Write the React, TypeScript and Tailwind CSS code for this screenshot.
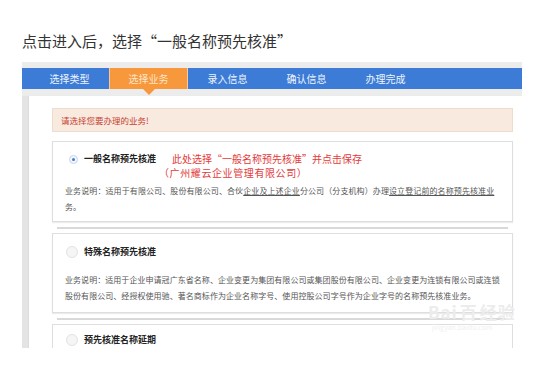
import React from "react";

const tabs = ["选择类型", "选择业务", "录入信息", "确认信息", "办理完成"];

export default function App() {
  return (
    <div className="relative w-[560px] h-[377px] overflow-hidden bg-white font-['Noto_Sans_CJK_SC','Noto_Sans',sans-serif]">
      <div className="pt-[31px] pl-[22px] text-[15px] leading-[20px] text-[#333]">
        点击进入后，选择“一般名称预先核准”
      </div>

      <div className="mt-[11px] ml-[22px] w-[500px] h-[286px] bg-[#ececec] flex flex-col pt-[6px] overflow-hidden">
        {/* nav */}
        <div className="h-[21px] bg-[#3c7cd6] flex pl-[8px] shrink-0">
          {tabs.map((t, i) =>
            i === 1 ? (
              <div
                key={t}
                className="relative w-[79px] flex items-center justify-center text-[10px] text-[#fde6cc] bg-[#f8983d] border-x border-[#f6c89a]"
              >
                {t}
                <div className="absolute left-1/2 -translate-x-1/2 top-full w-0 h-0 border-l-[6px] border-r-[6px] border-t-[6px] border-l-transparent border-r-transparent border-t-[#f8983d]" />
              </div>
            ) : (
              <div key={t} className="w-[79px] flex items-center justify-center text-[10px] text-[#eef4fc]">
                {t}
              </div>
            )
          )}
        </div>
        <div className="h-[7px] shrink-0" />

        <div className="flex flex-1">
          <div className="w-[6px] bg-[#e4e4e4]" />
          <div className="flex-1 bg-white border-l border-[#dcdcdc] pl-[23px] pr-[9px] pt-[12px]">
            {/* notice */}
            <div className="h-[24px] bg-[#f8eadf] border border-[#efdccd] flex items-center pl-[8px] text-[8.5px] text-[#c7402f]">
              请选择您要办理的业务!
            </div>

            {/* card 1 */}
            <div className="mt-[9px] h-[81px] border border-[#dedede] shadow-[0_1px_1px_rgba(0,0,0,0.08)] pt-[9px]">
              <div className="flex items-start">
                <div className="w-[31px] flex justify-end pr-[6px] pt-[4px]">
                  <div className="w-[9px] h-[9px] rounded-full border border-[#c9d6e6] bg-[#f3f6fa] flex items-center justify-center">
                    <div className="w-[3px] h-[3px] rounded-full bg-[#3c7cd6]" />
                  </div>
                </div>
                <div className="w-[88px] text-[9px] font-bold text-[#222] leading-[16px]">一般名称预先核准</div>
                <div className="text-[10px] leading-[14px] text-[#e33a3a] pt-[1px]">
                  <div>此处选择“一般名称预先核准”并点击保存</div>
                  <div className="-ml-[13px] tracking-[0.6px]">（广州耀云企业管理有限公司）</div>
                </div>
              </div>
              <div className="mt-[3px] pl-[12px] text-[8px] leading-[16px] text-[#555] tracking-[0.1px] whitespace-nowrap">
                <div>
                  业务说明：适用于有限公司、股份有限公司、合伙<span className="underline">企业及上述企业</span>分公司（分支机构）办理<span className="underline">设立登记前的名称预先核准业</span>
                </div>
                <div>务。</div>
              </div>
            </div>
            <div className="mt-[5px] mx-[5px] h-[2px] bg-[#d9d9d9]" />

            {/* card 2 */}
            <div className="mt-[4px] h-[80px] border border-[#dedede] shadow-[0_1px_1px_rgba(0,0,0,0.08)] pt-[10px]">
              <div className="flex items-center h-[16px]">
                <div className="w-[31px] flex justify-end pr-[6px]">
                  <div className="w-[12px] h-[12px] rounded-full border border-[#e2e2e2] bg-[#f5f5f5]" />
                </div>
                <div className="text-[9px] font-bold text-[#222]">特殊名称预先核准</div>
              </div>
              <div className="mt-[12px] pl-[12px] text-[8px] leading-[16px] text-[#555] tracking-[0.05px] whitespace-nowrap">
                <div>
                  业务说明：适用于企业申请冠广东省名称、企业变更为集团有限公司或集团股份有限公司、企业变更为连锁有限公司或连锁
                </div>
                <div>股份有限公司、经授权使用驰、著名商标作为企业名称字号、使用控股公司字号作为企业字号的名称预先核准业务。</div>
              </div>
            </div>
            <div className="mt-[5px] mx-[5px] h-[2px] bg-[#d9d9d9]" />

            {/* card 3 */}
            <div className="mt-[4px] h-[60px] border border-[#dedede] pt-[7px]">
              <div className="flex items-center h-[16px]">
                <div className="w-[31px] flex justify-end pr-[6px]">
                  <div className="w-[12px] h-[12px] rounded-full border border-[#e2e2e2] bg-[#f5f5f5]" />
                </div>
                <div className="text-[9px] font-bold text-[#222]">预先核准名称延期</div>
              </div>
            </div>
          </div>
        </div>
      </div>

      {/* watermark */}
      <div className="absolute left-[428px] top-[303px] text-[17px] font-bold text-[#ececec] leading-[18px] tracking-[1px]">
        Bai<span className="mx-[2px]">百</span>经验
      </div>
      <div className="absolute left-[432px] top-[323px] text-[7px] text-[#f0f0f0] leading-[9px]">
        jingyan.baidu.com
      </div>
    </div>
  );
}
